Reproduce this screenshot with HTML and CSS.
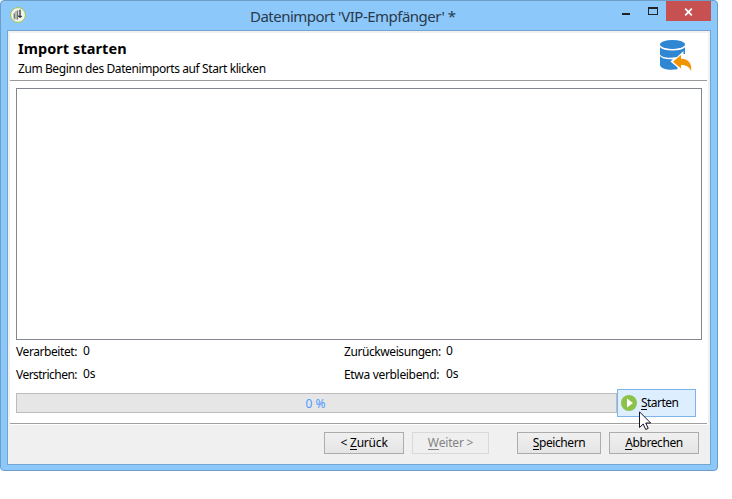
FILE: index.html
```
<!DOCTYPE html>
<html lang="de">
<head>
<meta charset="utf-8">
<title>Datenimport</title>
<link rel="stylesheet" href="styles.css">
</head>
<body>
<div class="window">
  <header class="titlebar">
    <svg class="app-icon" width="16" height="16" viewBox="0 0 16 16">
      <circle cx="8" cy="8" r="7.4" fill="#f3f4f0" stroke="#a3c644" stroke-width="1"/>
      <path d="M3 7 5 4.500 8.500 3 8 12.500 3.500 12.500Z" fill="#b4b9b5"/>
      <path d="M7.500 3.500V12.500M4.500 7V11.500" fill="none" stroke="#747b76" stroke-width="1"/>
      <path d="M10 2.800V10M8 8.800 10 10.300 11.800 9" fill="none" stroke="#333936" stroke-width="1.300"/>
    </svg>
    <h1 class="title">Datenimport 'VIP-Empfänger' *</h1>
    <div class="controls">
      <svg width="40" height="20" viewBox="0 0 40 20" shape-rendering="crispEdges">
        <path d="M2 12H10V14H2Z" fill="#222"/>
        <path d="M28 6H38V14H28Z M29 8V13H37V8Z" fill="#222" fill-rule="evenodd"/>
      </svg>
      <div class="close"><svg width="9" height="8" viewBox="0 0 9 8"><path d="M1.2 .7 7.8 7.3M7.8 .7 1.2 7.3" stroke="#fff" stroke-width="1.8"/></svg></div>
    </div>
  </header>
  <main class="client">
    <section class="page">
      <div class="intro">
        <div>
          <h2 class="heading">Import starten</h2>
          <p class="sub">Zum Beginn des Datenimports auf Start klicken</p>
        </div>
        <svg class="db-icon" width="34" height="34" viewBox="0 0 34 34">
          <g fill="#2f86d2">
            <ellipse cx="13.500" cy="5.500" rx="12.500" ry="4.600"/>
            <path d="M1 7.500C4 12.300 23 12.300 26 7.500V15H24.500V12L18 18C10 19.800 3 18.500 1 15.500Z"/>
            <path d="M1 17C3 19.600 8 20.600 14 20L11.500 22.500 18.500 28.500V30.300C11 31.500 3 30.500 1 26.500Z"/>
          </g>
          <path d="M1 7.200C4 12 23 12 26 7.200" fill="none" stroke="#fff" stroke-width="1.300"/>
          <path d="M14 22.700 22 16V19.700C29.500 19.500 33 24.500 32.200 32C30.300 28 27.500 25.800 22 26V29.500Z" fill="#f29400"/>
        </svg>
      </div>
      <div class="log"></div>
      <div class="stats">
        <span>Verarbeitet:</span><span class="v">0</span>
        <span>Zurückweisungen:</span><span class="v">0</span>
        <span class="tight">Verstrichen:</span><span class="v">0s</span>
        <span class="wide">Etwa verbleibend:</span><span class="v">0s</span>
      </div>
      <div class="run">
        <div class="progress"><span>0 %</span></div>
        <button class="start">
          <svg width="16" height="16" viewBox="0 0 16 16"><circle cx="8" cy="8" r="8" fill="#8bc34a"/><path d="M6 3.500V12.500L12 8Z" fill="#fff"/></svg>
          <span><u>S</u>tarten</span>
          <svg class="cursor" width="13" height="20" viewBox="0 0 13 20"><path d="M.5 .8V16.500L4.200 13 6.700 18.500 9.200 17.400 6.800 12H11.700Z" fill="#fff" stroke="#15152a" stroke-width="1"/></svg>
        </button>
      </div>
    </section>
    <footer class="footer">
      <button class="btn back"><span>&lt; <u>Z</u>urück</span></button>
      <button class="btn next" disabled><span><u>W</u>eiter &gt;</span></button>
      <button class="btn save"><span><u>S</u>peichern</span></button>
      <button class="btn cancel"><span><u>A</u>bbrechen</span></button>
    </footer>
  </main>
</div>
</body>
</html>
```
FILE: styles.css
```
* { box-sizing: border-box; }
body { margin: 0; background: #fff; color: #000; font: 12px/16px "Noto Sans", "Open Sans", sans-serif; }
h1, h2, p { margin: 0; font-weight: 400; }
u { text-decoration: none; border-bottom: 1px solid currentColor; display: inline-block; line-height: 13px; height: 14px; }
.window { width: 718px; height: 471px; padding: 0 6px 6px; border: 1px solid #6f9dc9; border-radius: 4px; background: #8dc8fb; }
.titlebar { display: flex; height: 29px; }
.app-icon { margin: 6px 0 0 3px; flex: none; }
.title { flex: 1; padding: 5px 0 0 224px; font-size: 15px; line-height: 20px; letter-spacing: -.51px; white-space: nowrap; color: #293a4a; }
.controls { display: flex; }
.controls > svg { margin-right: 6px; }
.close { width: 45px; height: 20px; padding: 7px 0 0 18px; background: #c75050; display: flex; }
.client { height: 435px; border: 1px solid #73a5d4; background: #f0f0f0; padding: 2px 2px 0; display: flex; flex-direction: column; }
.page { height: 392px; background: #fff; border-bottom: 1px solid #fff; }
.intro { display: flex; justify-content: space-between; height: 48px; width: 697px; border-bottom: 1px solid #999; padding: 5px 14px 0 8px; }
.heading { font-size: 14.5px; font-weight: 700; line-height: 20px; letter-spacing: .07px; white-space: nowrap; }
.sub { margin-top: 3px; line-height: 16px; letter-spacing: -.41px; white-space: nowrap; }
.db-icon { margin-top: 1px; }
.log { width: 686px; height: 252px; margin: 7px 0 0 6px; border: 1px solid #828790; }
.stats { display: grid; grid-template-columns: 67px 261px 102px 50px; grid-auto-rows: 23px; padding: 4px 0 0 6px; white-space: nowrap; }
.stats span { letter-spacing: -.42px; }
.stats .tight { letter-spacing: -.53px; }
.stats .wide { letter-spacing: -.32px; }
.stats .v { margin-top: -1px; letter-spacing: 0; }
.run { display: flex; margin: -1px 0 0 6px; }
.progress { width: 601px; height: 20px; margin-top: 4px; border: 1px solid #bcbcbc; background: #e6e6e6; color: #4a9aff; text-align: center; line-height: 20px; padding-right: 2px; }
.start { position: relative; display: flex; align-items: center; gap: 4px; width: 79px; height: 28px; padding: 0 3px; border: 1px solid #7eb4ea; background: #ddeeff; font: inherit; letter-spacing: -.55px; color: #000; }
.cursor { position: absolute; left: 21px; top: 21px; }
.footer { display: flex; width: 697px; border-top: 1px solid #a0a0a0; box-shadow: inset 0 1px #fff; height: 40px; margin-top: -2px; padding: 8px 0 0 314px; background: #f0f0f0; }
.btn { height: 22px; padding: 0; border: 1px solid #acacac; background: linear-gradient(#f0f0f0, #e5e5e5); font: inherit; letter-spacing: -.4px; white-space: nowrap; color: #000; flex: none; }
.btn:disabled { border-color: #d9d9d9; background: #efefef; color: #838383; }
.back { width: 80px; margin-right: 8px; }
.back, .next { letter-spacing: -.2px; }
.next { width: 77px; margin-right: 28px; }
.save { width: 84px; margin-right: 8px; }
.cancel { width: 90px; }
```
